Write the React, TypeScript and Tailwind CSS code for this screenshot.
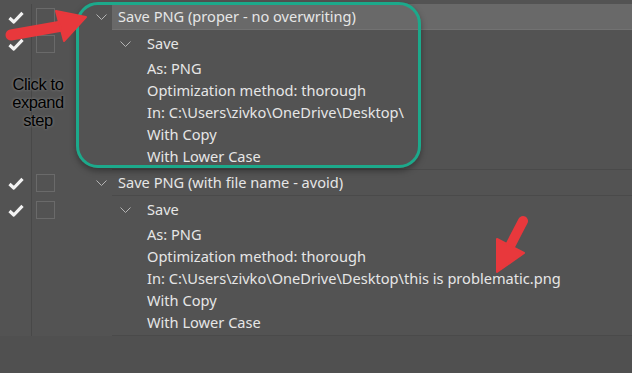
import React from 'react';

const font = { fontFamily: '"Noto Sans", "Open Sans", sans-serif' };

function Check() {
    return (
        <svg width="16" height="13" viewBox="0 0 16 13" className="text-[#f2f2f2]">
            <path d="M1.5 7 L5.8 11 L14.5 1.8" fill="none" stroke="currentColor" strokeWidth="3.2" strokeLinejoin="round" />
        </svg>
    );
}

function Chevron() {
    return (
        <svg width="11" height="6" viewBox="0 0 11 6" className="text-[#b4b4b4]">
            <path d="M0.5 0.5 L5.5 5.5 L10.5 0.5" fill="none" stroke="currentColor" strokeWidth="1" />
        </svg>
    );
}

function Box() {
    return <div className="w-[19px] h-[18px] border border-[#6a6a6a]" />;
}

interface RowProps {
    check?: boolean;
    height: string;
    children?: React.ReactNode;
}

function Row({ check, height, children }: RowProps) {
    return (
        <div className={`flex ${height}`}>
            <div className="w-[32px] shrink-0 border-r border-[#484848] flex items-center justify-center">
                {check && <Check />}
            </div>
            <div className="w-[33px] shrink-0 flex items-center pl-[4px]">{check && <Box />}</div>
            <div className="flex-1 flex">{children}</div>
        </div>
    );
}

function Step({ title, path, active }: { title: string; path: string; active?: boolean }) {
    const params = ['As: PNG', 'Optimization method: thorough', `In: ${path}`, 'With Copy', 'With Lower Case'];
    return (
        <div>
            <Row check height="h-[26px]">
                <div className="w-[47px] flex items-center justify-end pr-[5px]">
                    <Chevron />
                </div>
                <div
                    className={`flex-1 flex items-center pl-[6px] text-[14.6px] text-[#e6e6e6] border-b ${
                        active ? 'bg-[#696969] border-[#727272]' : 'border-[#4a4a4a]'
                    }`}
                >
                    {title}
                </div>
            </Row>
            <Row check height="h-[28px]">
                <div className="w-[82px] flex items-center justify-end pr-[16px]">
                    <Chevron />
                </div>
                <div className="flex items-center text-[14.6px] text-[#e6e6e6]">Save</div>
            </Row>
            {params.map(p => (
                <Row key={p} height="h-[22px]">
                    <div className="w-[82px]" />
                    <div className="flex items-center text-[14.6px] text-[#e6e6e6] whitespace-nowrap">{p}</div>
                </Row>
            ))}
            <Row height="h-[2px]">
                <div className="flex-1 ml-[47px] border-b border-[#4a4a4a]" />
            </Row>
        </div>
    );
}

export default function App() {
    return (
        <div className="relative w-[632px] h-[373px] bg-[#505050] overflow-hidden" style={font}>
            <div className="bg-[#535353] pt-[4px]">
                <Step title="Save PNG (proper - no overwriting)" path="C:\Users\zivko\OneDrive\Desktop\" active />
                <Step title="Save PNG (with file name - avoid)" path="C:\Users\zivko\OneDrive\Desktop\this is problematic.png" />
            </div>

            <div className="absolute left-[76px] top-[2px] w-[345px] h-[166px] rounded-[22px] border-[3px] border-[#1ca98b] shadow-[0_3px_6px_rgba(0,0,0,0.35)] pointer-events-none" />

            <div
                className="absolute left-[6px] top-[75px] w-[64px] text-center text-[16.5px] leading-[18px] tracking-[-0.4px] text-black [text-shadow:0_0_3px_rgba(255,255,255,0.35)]"
                style={{ fontFamily: '"Liberation Sans", Arial, sans-serif' }}
            >
                Click to
                <br />
                expand
                <br />
                step
            </div>

            <svg className="absolute left-0 top-0 pointer-events-none" width="632" height="373" viewBox="0 0 632 373">
                <line x1="11" y1="35" x2="62" y2="26" stroke="#e8383c" strokeWidth="11" strokeLinecap="round" />
                <polygon points="56,11 86,17 64,41" fill="#e8383c" strokeLinejoin="round" stroke="#e8383c" strokeWidth="2" />
                <line x1="523" y1="221" x2="508" y2="250" stroke="#e8383c" strokeWidth="10" strokeLinecap="round" />
                <polygon points="497,239 524,253 497,272" fill="#e8383c" strokeLinejoin="round" stroke="#e8383c" strokeWidth="2" />
            </svg>
        </div>
    );
}
